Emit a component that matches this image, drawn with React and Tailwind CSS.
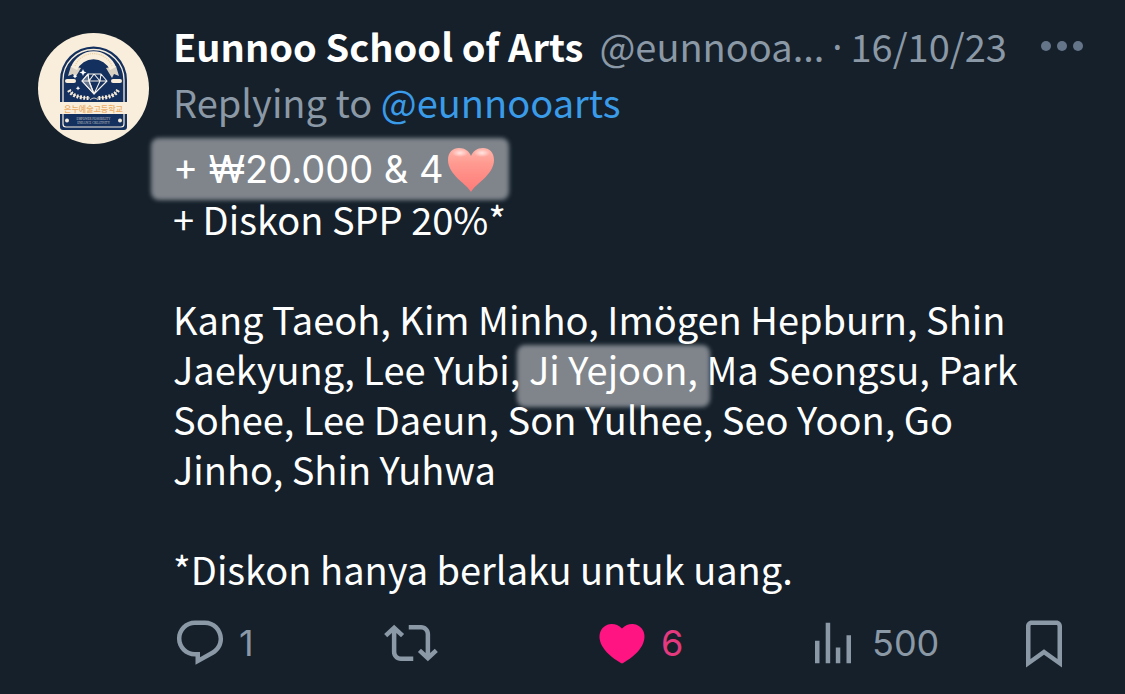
const icons = {
  reply:
    "M1.751 10c0-4.42 3.584-8 8.005-8h4.366c4.49 0 8.129 3.64 8.129 8.13 0 2.96-1.607 5.68-4.196 7.11l-8.054 4.46v-3.69h-.067c-4.49.1-8.183-3.51-8.183-8.01zm8.005-6c-3.317 0-6.005 2.69-6.005 6 0 3.37 2.77 6.08 6.138 6.01l.351-.01h1.761v2.3l5.087-2.81c1.951-1.08 3.163-3.13 3.163-5.36 0-3.39-2.744-6.13-6.129-6.13H9.756z",
  repost:
    "M4.5 3.88l4.432 4.14-1.364 1.46L5.5 7.55V16c0 1.1.896 2 2 2H13v2H7.5c-2.209 0-4-1.79-4-4V7.55L1.432 9.48.068 8.02 4.5 3.88zM16.5 6H11V4h5.5c2.209 0 4 1.79 4 4v8.45l2.068-1.93 1.364 1.46-4.432 4.14-4.432-4.14 1.364-1.46 2.068 1.93V8c0-1.1-.896-2-2-2z",
  heart:
    "M20.884 13.19c-1.351 2.48-4.001 5.12-8.379 7.67l-.503.3-.504-.3c-4.379-2.55-7.029-5.19-8.382-7.67-1.36-2.5-1.41-4.86-.514-6.67.887-1.79 2.647-2.91 4.601-3.01 1.651-.09 3.368.56 4.798 2.01 1.429-1.45 3.146-2.1 4.796-2.01 1.954.1 3.714 1.22 4.601 3.01.896 1.81.846 4.17-.514 6.67z",
  views:
    "M8.75 21V3h2v18h-2zM18 21V8.5h2V21h-2zM4 21l.004-10h2L6 21H4zm9.248 0v-7h2v7h-2z",
  bookmark:
    "M4 4.5C4 3.12 5.119 2 6.5 2h11C18.881 2 20 3.12 20 4.5v18.44l-8-5.71-8 5.71V4.5zM6.5 4c-.276 0-.5.22-.5.5v14.56l6-4.29 6 4.29V4.5c0-.28-.224-.5-.5-.5h-11z",
};

const actions = [
  { id: "reply", label: "Reply", count: "1" },
  { id: "repost", label: "Repost" },
  { id: "heart", label: "Like", count: "6", active: true },
  { id: "views", label: "Views", count: "500" },
  { id: "bookmark", label: "Bookmark" },
];

const Avatar = () => (
  <svg viewBox="0 0 111 111" className="size-[111px] shrink-0" role="img" aria-label="Eunnoo School of Arts">
    <circle cx="55.5" cy="55.5" r="55.5" fill="#f8eedb" />
    <path d="M22 94V47a33 33 0 0 1 67 0v47q0 3-3 3H25q-3 0-3-3z" fill="#14305f" />
    <path d="M25 70V47a30 30 0 0 1 61 0v23" fill="none" stroke="#f8eedb" strokeWidth="1.3" />
    {/* ribbon */}
    <path d="M33 33l-3 10 5-2 2 4 6-10zM78 33l3 10-5-2-2 4-6-10z" fill="#d9d0c4" />
    <path d="M33 34a24 24 0 0 1 45 0l-6 3a18 18 0 0 0-33 0z" fill="#f8eedb" />
    <path d="M37 33a20 20 0 0 1 37 0" fill="none" stroke="#e9cfa3" strokeWidth="1.2" strokeDasharray="1.2 1" />
    {/* diamond */}
    <g fill="none" stroke="#f4f0ea" strokeWidth="1.1" strokeLinejoin="round">
      <path d="M50 41h13l6 7-13 13-12-13zM44 48h25M51 48l5 13 6-13M50 41l1 7 5-7 6 7 1-7" />
      <path d="M44 48l6-7 1 7 5 13z" fill="#f4f0ea" fillOpacity="0.35" />
    </g>
    <path
      d="M45 36l1 2.5 2.500 1-2.500 1-1 2.5-1-2.5-2.500-1 2.500-1zM37 41l.7 1.6 1.6.7-1.600.7-.7 1.6-.7-1.6-1.600-.7 1.600-.7zM40 53l.7 1.6 1.6.7-1.600.7-.7 1.6-.7-1.6-1.600-.7 1.600-.7z"
      fill="#fff"
    />
    <rect x="27" y="46" width="11" height="4" rx="2" fill="#f8eedb" />
    <rect x="73" y="46" width="11" height="4" rx="2" fill="#f8eedb" />
    {/* laurels */}
    <g fill="none" stroke="#f8eedb">
      <path d="M31 57q4 8 21 8M80 57q-4 8-21 8" strokeWidth="0.8" />
      <path d="M31 57q4 8 21 8M80 57q-4 8-21 8" strokeWidth="4" strokeDasharray="1.8 1.6" />
      <path d="M52 67q4-4 8 0" strokeWidth="0.8" />
    </g>
    <rect x="22" y="69" width="67" height="12" fill="#f8eedb" />
    <text x="55.5" y="78.5" textAnchor="middle" fontSize="8" fill="#ecac66" fontFamily="'Noto Sans CJK KR', sans-serif" fontWeight="500">
      은누예술고등학교
    </text>
    <path d="M25 81v10q0 3 3 3h55q3 0 3-3V81" fill="none" stroke="#f8eedb" strokeWidth="1.2" />
    <circle cx="29" cy="87.5" r="2" fill="#f8eedb" />
    <circle cx="82" cy="87.5" r="2" fill="#f8eedb" />
    <g fill="#c9c9c8" fontSize="3" textAnchor="middle" fontFamily="'Liberation Serif', serif">
      <text x="55.5" y="87">EMPOWER POSSIBILITY</text>
      <text x="55.5" y="90.5">ENHANCE CREATIVITY</text>
    </g>
  </svg>
);

const HeartEmoji = () => (
  <svg viewBox="0 0 46 46" className="ml-1 inline-block size-[46px] align-[-10px]" role="img" aria-label="heart">
    <defs>
      <linearGradient id="heartFill" x1="0" y1="0" x2="0" y2="1">
        <stop offset="0" stopColor="#ffb5ab" />
        <stop offset="0.35" stopColor="#ff9a90" />
        <stop offset="1" stopColor="#ff7a78" />
      </linearGradient>
      <radialGradient id="heartShine">
        <stop offset="0" stopColor="#fff" stopOpacity="0.7" />
        <stop offset="1" stopColor="#fff" stopOpacity="0" />
      </radialGradient>
    </defs>
    <path d="M23 45C19 37 0 28 0 13 0 5 5 1 11 1c6 0 10 3 12 8 2-5 6-8 12-8 6 0 11 4 11 12 0 15-19 24-23 32z" fill="url(#heartFill)" />
    <ellipse cx="12" cy="6" rx="8" ry="4" fill="url(#heartShine)" />
    <ellipse cx="34" cy="6" rx="8" ry="4" fill="url(#heartShine)" />
  </svg>
);

const Action = ({ id, label, count, active }) => (
  <button
    aria-label={label}
    className={`flex items-center gap-3 font-['Inter',sans-serif] text-4xl ${active ? "text-[#e5397f]" : "text-[#8b98a5]"}`}
  >
    <svg viewBox="0 0 24 24" fill={active ? "#ff1482" : "currentColor"} className="size-[54px] shrink-0" aria-hidden="true">
      <path d={icons[id]} />
    </svg>
    {count && <span>{count}</span>}
  </button>
);

const App = () => {
  return (
    <article className="flex min-h-screen gap-6 bg-[#15202b] px-[38px] pt-[21px] font-['Noto_Sans_CJK_KR','Noto_Sans',sans-serif] text-[38px] leading-[50px] text-white">
      <div className="pt-3">
        <Avatar />
      </div>

      <div className="min-w-0 flex-1">
        <header className="flex items-center whitespace-nowrap">
          <h1 className="font-bold">Eunnoo School of Arts</h1>
          <span className="ml-4 text-[#8b98a5]">@eunnooa...</span>
          <span className="ml-2 font-['Noto_Sans',sans-serif] text-[#8b98a5]">·</span>
          <time className="ml-2 text-[#8b98a5]">16/10/23</time>
          <button aria-label="More" className="ml-auto pr-1 text-[#64758a]">
            <svg viewBox="0 0 42 10" fill="currentColor" className="h-[10px] w-[42px]" aria-hidden="true">
              <circle cx="5" cy="5" r="5" />
              <circle cx="21" cy="5" r="5" />
              <circle cx="37" cy="5" r="5" />
            </svg>
          </button>
        </header>

        <p className="mt-[6px] text-[#8b98a5]">
          Replying to{" "}
          <a href="#eunnooarts" className="text-[#3a9be8]">
            @eunnooarts
          </a>
        </p>

        <div className="isolate mt-[17px]">
          <p className="h-[50px] whitespace-nowrap font-['Inter',sans-serif]">
            <mark className="relative bg-transparent text-white">
              <span className="absolute -top-2 -right-[15px] -left-[22px] -z-10 h-[62px] rounded-lg bg-[#80858c] blur-[2px]" />
              + ₩20.000 &amp; 4<HeartEmoji />
            </mark>
          </p>
          <p>+ Diskon SPP 20%*</p>

          <p className="mt-[50px]">
            Kang Taeoh, Kim Minho, Imögen Hepburn, Shin
            <br />
            Jaekyung, Lee Yubi,{" "}
            <mark className="relative bg-transparent text-white">
              <span className="absolute -inset-x-3 top-1 -z-10 h-[62px] rounded-lg bg-[#80858c] blur-[2px]" />
              Ji Yejoon,
            </mark>{" "}
            Ma Seongsu, Park
            <br />
            Sohee, Lee Daeun, Son Yulhee, Seo Yoon, Go
            <br />
            Jinho, Shin Yuhwa
          </p>

          <p className="mt-[50px]">*Diskon hanya berlaku untuk uang.</p>
        </div>

        <footer className="mt-[22px] grid grid-cols-[1fr_1fr_1fr_1fr_auto] pr-4">
          {actions.map((action) => (
            <Action key={action.id} {...action} />
          ))}
        </footer>
      </div>
    </article>
  );
};

export default App;
